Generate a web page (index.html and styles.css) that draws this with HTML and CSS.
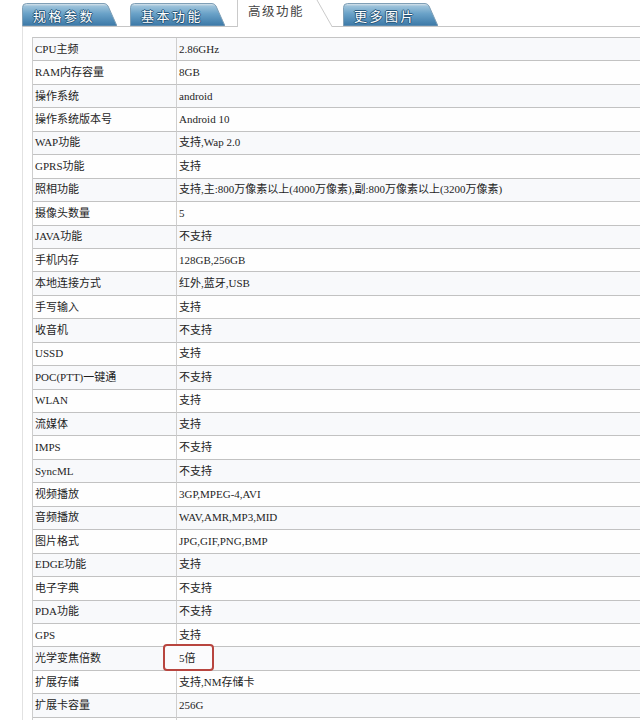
FILE: index.html
```html
<!DOCTYPE html>
<html lang="zh-CN">
<head>
<meta charset="utf-8">
<title>高级功能</title>
<link rel="stylesheet" href="styles.css">
</head>
<body>
<div class="page">
  <div class="tabs">
    <div class="tab">
      <svg class="tab-shape" viewBox="0 0 95 23" preserveAspectRatio="none"><defs><linearGradient id="g1" x1="0" y1="0" x2="0" y2="1"><stop offset="0" stop-color="#e2e9ee"/><stop offset="0.12" stop-color="#9cc2da"/><stop offset="0.45" stop-color="#6aa2c8"/><stop offset="1" stop-color="#3a77a6"/></linearGradient></defs><path d="M0.5,23 V4.5 Q0.5,0.5 4.5,0.5 H82 Q84.5,0.5 86,3 L95,23 Z" fill="url(#g1)" stroke="#7f9fb6" stroke-width="1"/></svg>
      <span class="tab-label">规格参数</span>
    </div>
    <div class="tab tab-2">
      <svg class="tab-shape" viewBox="0 0 95 23" preserveAspectRatio="none"><path d="M0.5,23 V4.5 Q0.5,0.5 4.5,0.5 H82 Q84.5,0.5 86,3 L95,23 Z" fill="url(#g1)" stroke="#7f9fb6" stroke-width="1"/></svg>
      <span class="tab-label">基本功能</span>
    </div>
    <div class="tab tab-active">
      <svg class="tab-shape" viewBox="0 0 96 28" preserveAspectRatio="none"><path d="M0.5,28 V0 H80 L95,28 Z" fill="#ffffff"/><path d="M0.5,28 V0 M80,0 L95,27.5" fill="none" stroke="#c9c9c9" stroke-width="1"/></svg>
      <span class="tab-label">高级功能</span>
    </div>
    <div class="tab tab-4">
      <svg class="tab-shape" viewBox="0 0 95 23" preserveAspectRatio="none"><path d="M0.5,23 V4.5 Q0.5,0.5 4.5,0.5 H82 Q84.5,0.5 86,3 L95,23 Z" fill="url(#g1)" stroke="#7f9fb6" stroke-width="1"/></svg>
      <span class="tab-label">更多图片</span>
    </div>
  </div>
  <div class="panel">
    <div class="spec">
      <div class="k">CPU主频</div><div class="v">2.86GHz</div>
      <div class="k">RAM内存容量</div><div class="v">8GB</div>
      <div class="k">操作系统</div><div class="v">android</div>
      <div class="k">操作系统版本号</div><div class="v">Android 10</div>
      <div class="k">WAP功能</div><div class="v">支持,Wap 2.0</div>
      <div class="k">GPRS功能</div><div class="v">支持</div>
      <div class="k">照相功能</div><div class="v">支持,主:800万像素以上(4000万像素),副:800万像素以上(3200万像素)</div>
      <div class="k">摄像头数量</div><div class="v">5</div>
      <div class="k">JAVA功能</div><div class="v">不支持</div>
      <div class="k">手机内存</div><div class="v">128GB,256GB</div>
      <div class="k">本地连接方式</div><div class="v">红外,蓝牙,USB</div>
      <div class="k">手写输入</div><div class="v">支持</div>
      <div class="k">收音机</div><div class="v">不支持</div>
      <div class="k">USSD</div><div class="v">支持</div>
      <div class="k">POC(PTT)一键通</div><div class="v">不支持</div>
      <div class="k">WLAN</div><div class="v">支持</div>
      <div class="k">流媒体</div><div class="v">支持</div>
      <div class="k">IMPS</div><div class="v">不支持</div>
      <div class="k">SyncML</div><div class="v">不支持</div>
      <div class="k">视频播放</div><div class="v">3GP,MPEG-4,AVI</div>
      <div class="k">音频播放</div><div class="v">WAV,AMR,MP3,MID</div>
      <div class="k">图片格式</div><div class="v">JPG,GIF,PNG,BMP</div>
      <div class="k">EDGE功能</div><div class="v">支持</div>
      <div class="k">电子字典</div><div class="v">不支持</div>
      <div class="k">PDA功能</div><div class="v">不支持</div>
      <div class="k">GPS</div><div class="v">支持</div>
      <div class="k">光学变焦倍数</div><div class="v v-marked"><span class="mark"></span><span class="mark-text">5倍</span></div>
      <div class="k">扩展存储</div><div class="v">支持,NM存储卡</div>
      <div class="k">扩展卡容量</div><div class="v">256G</div>
      <div class="k">&nbsp;</div><div class="v">&nbsp;</div>
    </div>
  </div>
</div>
</body>
</html>
```

FILE: styles.css
```css
html, body {
  margin: 0;
  padding: 0;
  background: #ffffff;
}
body {
  font-family: "Liberation Serif", "Noto Sans CJK SC", serif;
  font-size: 11px;
  color: #1e1e1e;
  overflow: hidden;
}
.page {
  width: 640px;
  height: 720px;
  overflow: hidden;
}
.tabs {
  display: flex;
  align-items: flex-end;
  height: 26px;
  margin-left: 22px;
  border-bottom: 1px solid #c6c6c6;
}
.tab {
  position: relative;
  width: 95px;
  height: 23px;
  flex: none;
  display: flex;
  align-items: center;
}
.tab-2 { margin-left: 13px; }
.tab-active {
  margin-left: 12px;
  width: 96px;
  height: 27px;
  margin-bottom: -1px;
}
.tab-4 { margin-left: 10px; }
.tab-shape {
  position: absolute;
  left: 0;
  top: 0;
  width: 100%;
  height: 100%;
}
.tab-label {
  position: relative;
  padding-left: 11px;
  padding-top: 2px;
  font-family: "Noto Sans CJK SC", sans-serif;
  font-size: 13px;
  letter-spacing: 2.5px;
  color: #ffffff;
  line-height: 1;
  text-shadow: 0 0 1px #1d4a6c, 1px 0 0 #2d5c80, -1px 0 0 #2d5c80, 0 1px 0 #2d5c80, 0 -1px 0 #2d5c80;
}
.tab-active .tab-label {
  padding-left: 11px;
  padding-top: 0;
  margin-top: -5px;
  font-size: 12.5px;
  letter-spacing: 1.5px;
  color: #444444;
  text-shadow: none;
}
.panel {
  margin-left: 22px;
  border-left: 1px solid #e2e2e2;
  padding: 10px 0 0 9px;
  height: 700px;
}
.spec {
  display: grid;
  grid-template-columns: 144px 1fr;
  grid-auto-rows: 23.44px;
  border-top: 1px solid #c4c4c4;
  border-left: 1px solid #cdcdcd;
}
.k, .v {
  display: flex;
  align-items: center;
  border-bottom: 1px solid #c2c2c2;
  white-space: nowrap;
  line-height: 1;
}
.k {
  padding-left: 2px;
  border-right: 1px solid #cfcfcf;
}
.v {
  padding-left: 2px;
}
.k:nth-child(4n+1), .v:nth-child(4n+2) {
  background: #f8f9fb;
}
.k:nth-child(4n+3), .v:nth-child(4n+4) {
  background: #fefefe;
}
.v-marked {
  position: relative;
}
.mark {
  position: absolute;
  left: -14px;
  top: -3px;
  width: 47px;
  height: 23px;
  border: 2px solid #b8453f;
  border-radius: 4px;
  background: #fbfbfd;
  z-index: 0;
}
.mark-text {
  position: relative;
  z-index: 1;
}
```
